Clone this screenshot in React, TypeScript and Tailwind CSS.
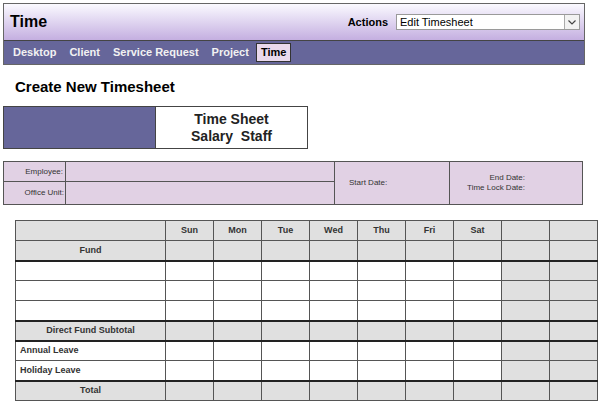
import React from "react";

const F = { fontFamily: '"Liberation Sans", Arial, sans-serif' };

const days = ["Sun", "Mon", "Tue", "Wed", "Thu", "Fri", "Sat"];

type RowKind = "fund" | "data" | "sub" | "leave" | "total";

function Row({ label, kind, thick, align }: { label: string; kind: RowKind; thick?: boolean; align?: "left" | "center" }) {
  const gray = kind === "fund" || kind === "sub" || kind === "total";
  const b = thick ? "border-b-2 border-b-[#222]" : "";
  return (
    <tr className="h-[20px]">
      <td
        className={`border border-[#555] ${b} ${gray ? "bg-[#e0e0e0]" : "bg-white"} ${align === "left" ? "text-left pl-[4px]" : "text-center"} text-[9px] font-bold text-[#333] p-0`}
      >
        {label}
      </td>
      {days.map((d) => (
        <td key={d} className={`border border-[#555] ${b} ${gray ? "bg-[#e0e0e0]" : "bg-white"} p-0`} />
      ))}
      <td className={`border border-[#555] ${b} bg-[#e0e0e0] p-0`} />
      <td className={`border border-[#555] ${b} bg-[#e0e0e0] p-0`} />
    </tr>
  );
}

export default function App() {
  return (
    <div className="w-[605px] h-[408px] bg-white overflow-hidden relative" style={F}>
      {/* Header */}
      <div className="ml-[3px] mt-[3px] w-[582px] border border-[#666]">
        <div className="h-[37px] bg-gradient-to-b from-[#fbfaff] to-[#c4afe0] border-b border-[#444] flex items-center pl-[6px] pr-[4px]">
          <div className="text-[16px] font-bold text-black leading-none">Time</div>
          <div className="ml-auto flex items-center">
            <span className="text-[11px] font-bold text-black mr-[8px]">Actions</span>
            <div className="w-[184px] h-[16px] bg-white border border-[#9a9a9a] flex items-center">
              <span className="text-[11px] text-black pl-[3px] leading-none">Edit Timesheet</span>
              <div className="ml-auto w-[15px] h-[14px] border-l border-[#aaa] bg-[#f2f2f2] flex items-center justify-center">
                <svg width="8" height="5" viewBox="0 0 8 5">
                  <path d="M0.5 0.5 L4 4 L7.5 0.5" stroke="#444" strokeWidth="1.2" fill="none" />
                </svg>
              </div>
            </div>
          </div>
        </div>
        <div className="h-[23px] bg-[#66669a] flex items-center pl-[9px] gap-[13px] text-[11px] font-bold text-[#f2f2f2]">
          <span>Desktop</span>
          <span>Client</span>
          <span>Service Request</span>
          <span>Project</span>
          <span className="-ml-[6px] h-[19px] px-[4px] flex items-center bg-[#e9d9ec] border border-[#333] text-black">Time</span>
        </div>
      </div>

      {/* Title */}
      <div className="mt-[13px] ml-[15px] h-[18px] text-[15px] leading-[18px] font-bold text-black">Create New Timesheet</div>

      {/* Time sheet box */}
      <div className="mt-[10px] ml-[3px] w-[305px] h-[43px] border border-[#444] flex">
        <div className="w-[152px] bg-[#66669a] border-r border-[#444]" />
        <div className="flex-1 bg-white flex flex-col items-center justify-center text-[14px] leading-[17px] font-bold text-[#222]">
          <div>Time Sheet</div>
          <div>Salary&nbsp; Staff</div>
        </div>
      </div>

      {/* Info table */}
      <div className="mt-[12px] ml-[3px] w-[580px] h-[44px] border border-[#555] bg-[#e1d1e4] flex text-[8px] text-[#333]">
        <div className="w-[330px] flex flex-col">
          <div className="h-[20px] flex border-b border-[#555]">
            <div className="w-[62px] border-r border-[#555] flex items-center justify-end pr-[2px]">Employee:</div>
            <div className="flex-1" />
          </div>
          <div className="flex-1 flex">
            <div className="w-[62px] border-r border-[#555] flex items-center justify-end pr-[1px]">Office Unit:</div>
            <div className="flex-1" />
          </div>
        </div>
        <div className="w-[115px] border-l border-[#555] flex items-center pl-[14px]">Start Date:</div>
        <div className="flex-1 border-l border-[#555] flex flex-col items-end justify-center pr-[57px] leading-[10px]">
          <div>End Date:</div>
          <div>Time Lock Date:</div>
        </div>
      </div>

      {/* Main table */}
      <div className="mt-[15px] ml-[15px]">
        <table className="table-fixed border-collapse w-[581px]">
          <colgroup>
            <col className="w-[150px]" />
            {[0, 1, 2, 3, 4, 5, 6, 7, 8].map((i) => (
              <col key={i} className="w-[48px]" />
            ))}
          </colgroup>
          <tbody>
            <tr className="h-[20px]">
              <td className="border border-[#555] bg-[#e0e0e0] p-0" />
              {days.map((d) => (
                <td key={d} className="border border-[#555] bg-[#e0e0e0] text-center text-[9px] font-bold text-[#333] p-0">
                  {d}
                </td>
              ))}
              <td className="border border-[#555] bg-[#e0e0e0] p-0" />
              <td className="border border-[#555] bg-[#e0e0e0] p-0" />
            </tr>
            <Row label="Fund" kind="fund" thick />
            <Row label="" kind="data" />
            <Row label="" kind="data" />
            <Row label="" kind="data" thick />
            <Row label="Direct Fund Subtotal" kind="sub" thick />
            <Row label="Annual Leave" kind="leave" align="left" />
            <Row label="Holiday Leave" kind="leave" align="left" thick />
            <Row label="Total" kind="total" />
          </tbody>
        </table>
      </div>
    </div>
  );
}
